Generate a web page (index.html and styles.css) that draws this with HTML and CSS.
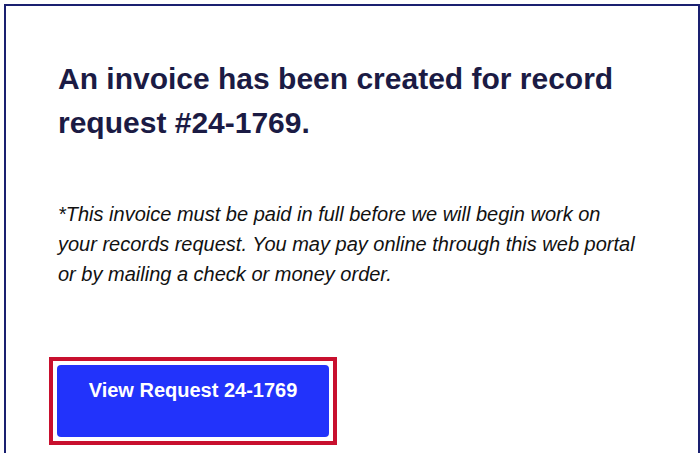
FILE: index.html
```html
<!DOCTYPE html>
<html lang="en">
<head>
<meta charset="utf-8">
<title>Invoice created</title>
<link rel="stylesheet" href="styles.css">
</head>
<body>
<div class="card">
  <h1 class="title">An invoice has been created for record request #24-1769.</h1>
  <p class="note">*This invoice must be paid in full before we will begin work on your records request. You may pay online through this web portal or by mailing a check or money order.</p>
  <div class="btn-frame">
    <a class="btn" href="#">View Request 24-1769</a>
  </div>
</div>
</body>
</html>
```

FILE: styles.css
```css
html, body {
  margin: 0;
  padding: 0;
  background: #ffffff;
}
body {
  font-family: "Liberation Sans", Arial, sans-serif;
  overflow: hidden;
  height: 453px;
}
.card {
  margin: 4px 0 0 4px;
  border: 2px solid #1a2070;
  border-bottom: none;
  padding: 51px 58px 0 52px;
  height: 449px;
  box-sizing: border-box;
}
.title {
  margin: 0;
  font-size: 30px;
  line-height: 44px;
  font-weight: 700;
  color: #1b1b44;
}
.note {
  margin: 54px 0 0 0;
  font-size: 20px;
  line-height: 30px;
  font-style: italic;
  color: #111111;
}
.btn-frame {
  display: inline-block;
  margin: 68px 0 0 -9px;
  border: 4px solid #c8102e;
  padding: 4px;
}
.btn {
  display: block;
  width: 272px;
  height: 72px;
  box-sizing: border-box;
  padding-top: 13px;
  background: #2233fb;
  border-radius: 4px;
  color: #ffffff;
  font-size: 20px;
  line-height: 24px;
  font-weight: 700;
  text-align: center;
  text-decoration: none;
}
```
